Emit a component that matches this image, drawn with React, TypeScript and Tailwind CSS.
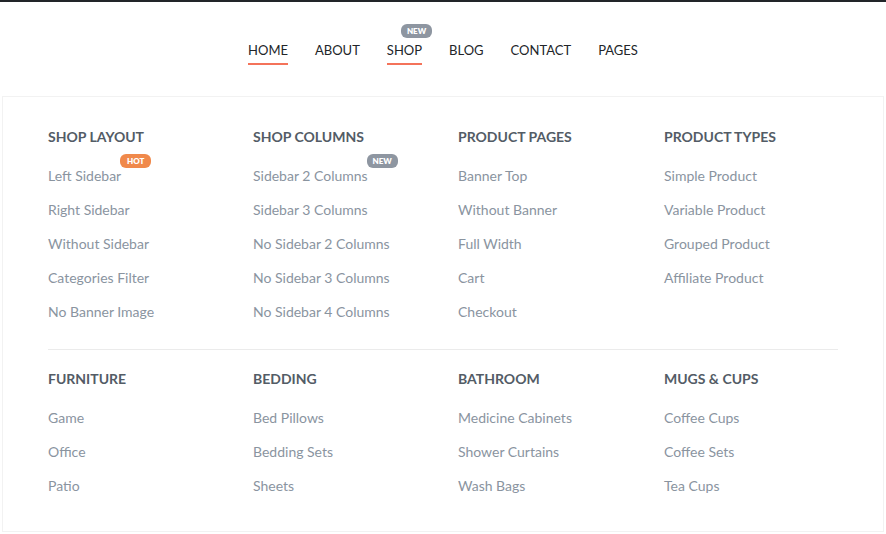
import React from "react";

type Item = { label: string; badge?: "hot" | "new" };
type Group = { title: string; items: Item[] };

const topNav = [
  { label: "HOME", active: true },
  { label: "ABOUT" },
  { label: "SHOP", active: true, badge: true },
  { label: "BLOG" },
  { label: "CONTACT" },
  { label: "PAGES" },
];

const rowOne: Group[] = [
  {
    title: "SHOP LAYOUT",
    items: [
      { label: "Left Sidebar", badge: "hot" },
      { label: "Right Sidebar" },
      { label: "Without Sidebar" },
      { label: "Categories Filter" },
      { label: "No Banner Image" },
    ],
  },
  {
    title: "SHOP COLUMNS",
    items: [
      { label: "Sidebar 2 Columns", badge: "new" },
      { label: "Sidebar 3 Columns" },
      { label: "No Sidebar 2 Columns" },
      { label: "No Sidebar 3 Columns" },
      { label: "No Sidebar 4 Columns" },
    ],
  },
  {
    title: "PRODUCT PAGES",
    items: [
      { label: "Banner Top" },
      { label: "Without Banner" },
      { label: "Full Width" },
      { label: "Cart" },
      { label: "Checkout" },
    ],
  },
  {
    title: "PRODUCT TYPES",
    items: [
      { label: "Simple Product" },
      { label: "Variable Product" },
      { label: "Grouped Product" },
      { label: "Affiliate Product" },
    ],
  },
];

const rowTwo: Group[] = [
  { title: "FURNITURE", items: [{ label: "Game" }, { label: "Office" }, { label: "Patio" }] },
  { title: "BEDDING", items: [{ label: "Bed Pillows" }, { label: "Bedding Sets" }, { label: "Sheets" }] },
  {
    title: "BATHROOM",
    items: [{ label: "Medicine Cabinets" }, { label: "Shower Curtains" }, { label: "Wash Bags" }],
  },
  { title: "MUGS & CUPS", items: [{ label: "Coffee Cups" }, { label: "Coffee Sets" }, { label: "Tea Cups" }] },
];

function Badge({ kind, className }: { kind: "hot" | "new"; className: string }) {
  return (
    <span
      className={`absolute flex h-[14px] w-[31px] items-center justify-center rounded-[6px] text-[8px] font-extrabold leading-none text-white ${
        kind === "hot" ? "bg-[#f0894b]" : "bg-[#8e96a1]"
      } ${className}`}
    >
      {kind === "hot" ? "HOT" : "NEW"}
    </span>
  );
}

function MenuRow({ groups }: { groups: Group[] }) {
  return (
    <div className="grid grid-cols-[205px_205px_206px_205px]">
      {groups.map((g) => (
        <div key={g.title}>
          <h4 className="text-[14px] font-bold leading-5 text-[#535c66]">{g.title}</h4>
          <ul className="mt-[19px] flex flex-col gap-[14px]">
            {g.items.map((it) => (
              <li key={it.label} className="text-[14px] leading-5 text-[#8a949f]">
                <span className="relative">
                  {it.label}
                  {it.badge && <Badge kind={it.badge} className="left-full top-[-13px] -ml-px" />}
                </span>
              </li>
            ))}
          </ul>
        </div>
      ))}
    </div>
  );
}

export default function App() {
  return (
    <div className="h-[534px] w-[886px] overflow-hidden bg-white font-['Lato','Liberation_Sans',sans-serif]">
      <div className="h-[2px] bg-[#222529]" />

      {/* Top navigation */}
      <nav className="flex h-[94px] justify-center pt-[38px]">
        <ul className="flex h-5 gap-[27px]">
          {topNav.map((n) => (
            <li key={n.label} className="relative text-[13px] leading-5 text-[#222529]">
              {n.label}
              {n.active && <span className="absolute left-0 right-0 top-[23px] h-[2px] bg-[#f4735a]" />}
              {n.badge && <Badge kind="new" className="right-[-10px] top-[-16px]" />}
            </li>
          ))}
        </ul>
      </nav>

      {/* Mega menu */}
      <div className="mx-[2px] h-[436px] border border-[#f2f2f2] px-[45px] pt-[30px]">
        <MenuRow groups={rowOne} />
        <div className="mb-[19px] mt-[27px] h-px w-[790px] bg-[#ebebeb]" />
        <MenuRow groups={rowTwo} />
      </div>
    </div>
  );
}
